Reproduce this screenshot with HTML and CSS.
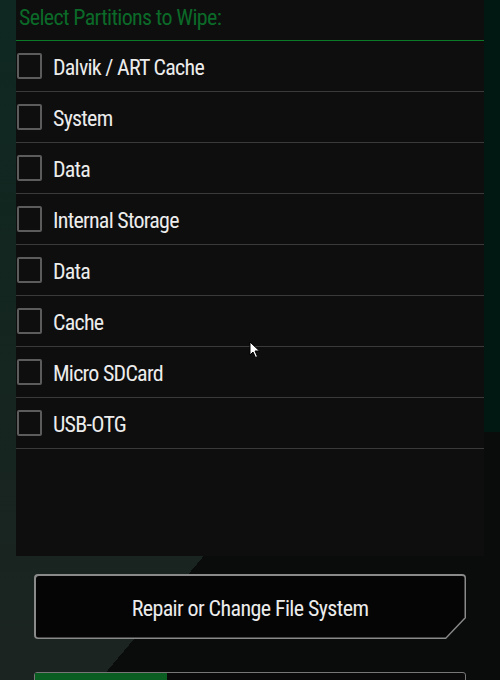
FILE: index.html
```html
<!DOCTYPE html>
<html lang="en">
<head>
    <meta charset="UTF-8">
    <meta name="viewport" content="width=device-width, initial-scale=1.0">
    <title>Wipe</title>
    <link rel="stylesheet" href="styles.css">
</head>
<body>
    <div class="screen">
        <!-- 파티션 목록 -->
        <div class="panel">
            <div class="title">Select Partitions to Wipe:</div>
            <ul class="parts">
                <li><span class="box"></span><span class="name">Dalvik / ART Cache</span></li>
                <li><span class="box"></span><span class="name">System</span></li>
                <li><span class="box"></span><span class="name">Data</span></li>
                <li><span class="box"></span><span class="name">Internal Storage</span></li>
                <li><span class="box"></span><span class="name">Data</span></li>
                <li><span class="box"></span><span class="name">Cache</span></li>
                <li><span class="box"></span><span class="name">Micro SDCard</span></li>
                <li><span class="box"></span><span class="name">USB-OTG</span></li>
            </ul>
        </div>

        <!-- 버튼 + 슬라이더 -->
        <div class="actions">
            <div class="btn">
                <div class="btn-in"><span class="label">Repair or Change File System</span></div>
            </div>
            <div class="slider"><div class="fill"></div></div>
        </div>

        <svg class="cursor" width="12" height="18" viewBox="0 0 12 18">
            <path d="M1 1 L1 14 L4 11 L6.5 16.5 L8.5 15.5 L6 10 L10.5 10 Z" fill="#fff" stroke="#000" stroke-width="1"/>
        </svg>
    </div>
</body>
</html>
```

FILE: styles.css
```css
html, body {
    margin: 0;
    padding: 0;
}
body {
    width: 500px;
    height: 680px;
    overflow: hidden;
    font-family: Roboto, "Liberation Sans", sans-serif;
    background: #0b0c0c;
}

.screen {
    position: relative;
    width: 500px;
    height: 680px;
    overflow: hidden;
    background:
        linear-gradient(#001712, #001712) right top / 16px 432px no-repeat,
        linear-gradient(130deg, transparent 0 62.6%, #0a0b0b 62.6% 100%),
        linear-gradient(180deg, #0f2822 0%, #15251f 55%, #1c2421 100%);
}

.panel {
    margin: 0 16px;
    height: 556px;
    background: #0e0e0e;
}

.title {
    height: 40px;
    padding-left: 3px;
    border-bottom: 1px solid #0b7a26;
    color: #0b6a28;
    font-size: 22px;
    line-height: 35px;
    font-stretch: condensed;
    letter-spacing: -0.65px;
}

.parts {
    list-style: none;
    margin: 0;
    padding: 0;
}
.parts li {
    display: flex;
    align-items: center;
    height: 50px;
    border-bottom: 1px solid #3a3a3a;
}
.box {
    width: 21px;
    height: 22px;
    margin-left: 1px;
    margin-right: 11px;
    border: 2px solid #5c5c5c;
    border-radius: 2px;
}
.name {
    padding-top: 3px;
    color: #ececec;
    font-size: 22px;
    font-stretch: condensed;
    letter-spacing: -0.75px;
}

.actions {
    padding: 18px 34px 0;
}
/* 오른쪽 아래 모서리가 잘린 버튼 */
.btn {
    height: 65px;
    padding: 1.5px;
    box-sizing: border-box;
    border-radius: 4px;
    background: #8a8a8a;
    clip-path: polygon(0 0, 100% 0, 100% calc(100% - 21px), calc(100% - 20px) 100%, 0 100%);
}
.btn-in {
    display: flex;
    align-items: center;
    justify-content: center;
    height: 100%;
    border-radius: 3px;
    background: #050505;
    clip-path: polygon(0 0, 100% 0, 100% calc(100% - 20px), calc(100% - 19px) 100%, 0 100%);
}
.label {
    padding-top: 3px;
    color: #ececec;
    font-size: 22px;
    font-stretch: condensed;
    letter-spacing: -0.6px;
}
.slider {
    margin-top: 33px;
    height: 20px;
    border: 1.5px solid #777;
    border-radius: 3px;
    background: #0a0a0a;
}
.fill {
    width: 132px;
    height: 100%;
    background: #0b5e22;
}

.cursor {
    position: absolute;
    left: 249px;
    top: 341px;
}
```
